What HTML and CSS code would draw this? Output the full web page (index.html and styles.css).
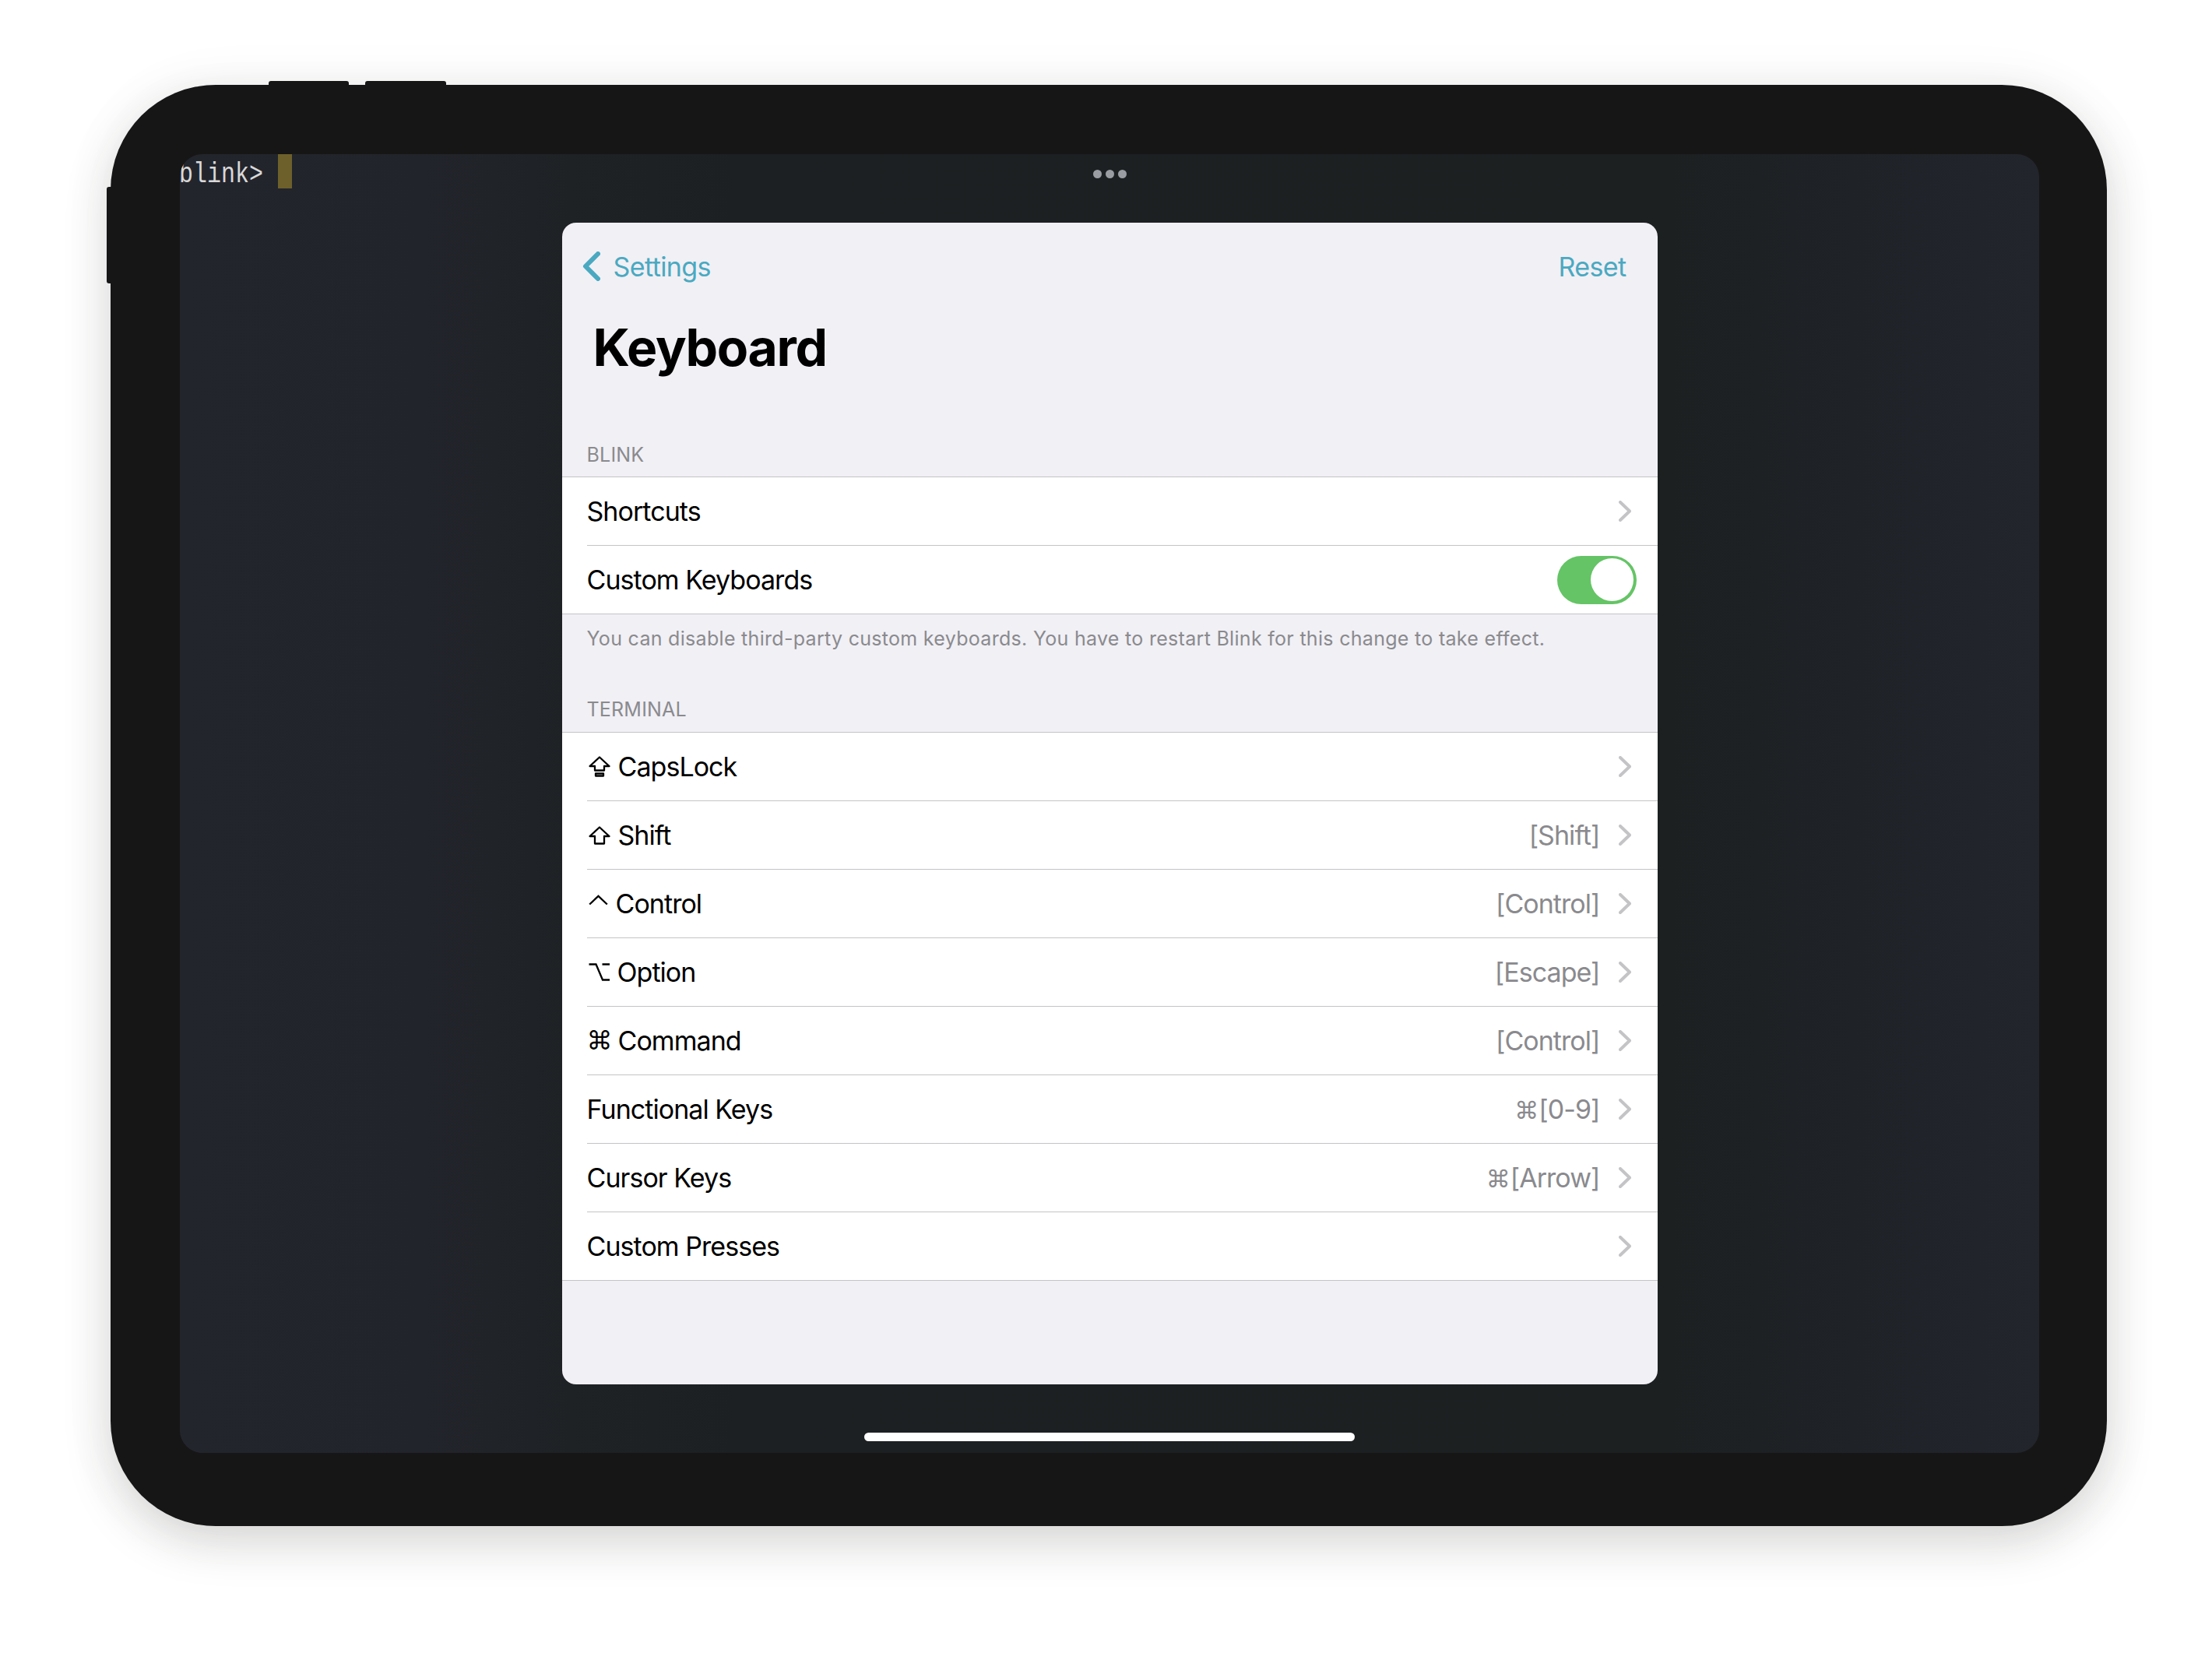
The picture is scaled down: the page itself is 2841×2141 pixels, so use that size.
FILE: index.html
```html
<!DOCTYPE html>
<html lang="en">
<head>
    <meta charset="UTF-8">
    <title>Keyboard</title>
    <link rel="stylesheet" href="styles.css">
</head>
<body>
    <div class="device">
        <span class="side-btn top-a"></span>
        <span class="side-btn top-b"></span>
        <span class="side-btn left-a"></span>
        <div class="screen">
            <div class="terminal">
                <span class="prompt">blink&gt;</span>
                <span class="cursor"></span>
            </div>
            <div class="dots"><i></i><i></i><i></i></div>
            <div class="card">
                <div class="nav">
                    <a class="back">
                        <svg width="23" height="38" viewBox="0 0 23 38"><path d="M20 3 L4 19 L20 35" fill="none" stroke="#4aa9c1" stroke-width="6" stroke-linecap="round" stroke-linejoin="round"/></svg>
                        Settings
                    </a>
                    <a class="reset">Reset</a>
                </div>
                <h1>Keyboard</h1>

                <div class="section-title first">BLINK</div>
                <div class="group">
                    <div class="row">
                        <span class="label">Shortcuts</span>
                        <svg class="chev" width="16" height="27" viewBox="0 0 16 27"><path d="M2 2 L14 13.5 L2 25" fill="none" stroke="#c4c4c7" stroke-width="4" stroke-linecap="round" stroke-linejoin="round"/></svg>
                    </div>
                    <div class="row">
                        <span class="label">Custom Keyboards</span>
                        <span class="toggle"><span class="knob"></span></span>
                    </div>
                </div>
                <p class="note">You can disable third-party custom keyboards. You have to restart Blink for this change to take effect.</p>

                <div class="section-title">TERMINAL</div>
                <div class="group">
                    <div class="row">
                        <span class="label">
                            <svg class="mod" width="28" height="27" viewBox="0 0 28 27"><path d="M14 1.5 L26.5 13 H20 V18.5 H8 V13 H1.5 Z M9 22.5 H19 V25.5 H9 Z" fill="none" stroke="#000" stroke-width="2.3" stroke-linejoin="round"/></svg>
                            CapsLock
                        </span>
                        <svg class="chev" width="16" height="27" viewBox="0 0 16 27"><path d="M2 2 L14 13.5 L2 25" fill="none" stroke="#c4c4c7" stroke-width="4" stroke-linecap="round" stroke-linejoin="round"/></svg>
                    </div>
                    <div class="row">
                        <span class="label">
                            <svg class="mod" width="28" height="24" viewBox="0 0 28 24"><path d="M14 1.5 L26.5 13 H20 V22.5 H8 V13 H1.5 Z" fill="none" stroke="#000" stroke-width="2.3" stroke-linejoin="round"/></svg>
                            Shift
                        </span>
                        <span class="value">[Shift]</span>
                        <svg class="chev" width="16" height="27" viewBox="0 0 16 27"><path d="M2 2 L14 13.5 L2 25" fill="none" stroke="#c4c4c7" stroke-width="4" stroke-linecap="round" stroke-linejoin="round"/></svg>
                    </div>
                    <div class="row">
                        <span class="label">
                            <svg class="mod ctrl" width="25" height="14" viewBox="0 0 25 14"><path d="M1.2 12.5 L12.5 1.8 L23.8 12.5" fill="none" stroke="#000" stroke-width="2.3"/></svg>
                            Control
                        </span>
                        <span class="value">[Control]</span>
                        <svg class="chev" width="16" height="27" viewBox="0 0 16 27"><path d="M2 2 L14 13.5 L2 25" fill="none" stroke="#c4c4c7" stroke-width="4" stroke-linecap="round" stroke-linejoin="round"/></svg>
                    </div>
                    <div class="row">
                        <span class="label">
                            <svg class="mod" width="27" height="23" viewBox="0 0 27 23"><path d="M0.5 1.5 H9.5 L18 21.5 H27 M17.5 1.5 H27" fill="none" stroke="#000" stroke-width="2.3"/></svg>
                            Option
                        </span>
                        <span class="value">[Escape]</span>
                        <svg class="chev" width="16" height="27" viewBox="0 0 16 27"><path d="M2 2 L14 13.5 L2 25" fill="none" stroke="#c4c4c7" stroke-width="4" stroke-linecap="round" stroke-linejoin="round"/></svg>
                    </div>
                    <div class="row">
                        <span class="label"><span class="key">⌘</span>Command</span>
                        <span class="value">[Control]</span>
                        <svg class="chev" width="16" height="27" viewBox="0 0 16 27"><path d="M2 2 L14 13.5 L2 25" fill="none" stroke="#c4c4c7" stroke-width="4" stroke-linecap="round" stroke-linejoin="round"/></svg>
                    </div>
                    <div class="row">
                        <span class="label">Functional Keys</span>
                        <span class="value"><span class="key-value">⌘</span>[0-9]</span>
                        <svg class="chev" width="16" height="27" viewBox="0 0 16 27"><path d="M2 2 L14 13.5 L2 25" fill="none" stroke="#c4c4c7" stroke-width="4" stroke-linecap="round" stroke-linejoin="round"/></svg>
                    </div>
                    <div class="row">
                        <span class="label">Cursor Keys</span>
                        <span class="value"><span class="key-value">⌘</span>[Arrow]</span>
                        <svg class="chev" width="16" height="27" viewBox="0 0 16 27"><path d="M2 2 L14 13.5 L2 25" fill="none" stroke="#c4c4c7" stroke-width="4" stroke-linecap="round" stroke-linejoin="round"/></svg>
                    </div>
                    <div class="row">
                        <span class="label">Custom Presses</span>
                        <svg class="chev" width="16" height="27" viewBox="0 0 16 27"><path d="M2 2 L14 13.5 L2 25" fill="none" stroke="#c4c4c7" stroke-width="4" stroke-linecap="round" stroke-linejoin="round"/></svg>
                    </div>
                </div>
            </div>
            <div class="home-bar"></div>
        </div>
    </div>
</body>
</html>
```

FILE: styles.css
```css
html, body {
    margin: 0;
    background: #fff;
}
body {
    width: 2841px;
    height: 2141px;
    padding: 109px 0 0 142px;
    box-sizing: border-box;
    overflow: hidden;
    font-family: Inter, "Noto Sans", sans-serif;
}
.device {
    position: relative;
    width: 2564px;
    height: 1851px;
    box-sizing: border-box;
    padding: 89px 87px 94px 89px;
    background: #161616;
    border-radius: 135px;
    box-shadow: 0 20px 60px rgba(40, 35, 25, 0.18), 0 0 90px rgba(0, 0, 0, 0.03);
}
.side-btn {
    position: absolute;
    background: #161616;
    border-radius: 3px;
}
.top-a {
    left: 203px;
    top: -5px;
    width: 103px;
    height: 10px;
}
.top-b {
    left: 327px;
    top: -5px;
    width: 104px;
    height: 10px;
}
.left-a {
    left: -5px;
    top: 131px;
    width: 10px;
    height: 124px;
}
.screen {
    position: relative;
    height: 1668px;
    border-radius: 29px;
    overflow: hidden;
    background: linear-gradient(90deg, #23252d 0, #22242b 13%, #1e2225 21%, #1c2022 30%, #1c2021 80%, #1f2227 90%, #22252c 100%);
}
.terminal {
    display: flex;
    height: 44px;
}
.prompt {
    width: 126px;
    margin-left: -1px;
    font: 37px/52px "Liberation Mono", monospace;
    color: #d8d8d8;
    transform: scaleX(0.81);
    transform-origin: 0 0;
}
.cursor {
    width: 18px;
    height: 44px;
    margin-left: 1px;
    background: #6d602a;
}
.dots {
    position: absolute;
    left: 1173px;
    top: 20px;
    display: flex;
    gap: 5px;
}
.dots i {
    width: 11px;
    height: 11px;
    border-radius: 50%;
    background: #9a9ea2;
}
.card {
    width: 1407px;
    height: 1492px;
    margin: 44px auto 0;
    background: #f1f0f5;
    border-radius: 18px;
    overflow: hidden;
}
.nav {
    display: flex;
    justify-content: space-between;
    align-items: center;
    height: 112px;
    padding: 0 40px 0 26px;
    font-size: 34px;
    letter-spacing: -0.6px;
    color: #4aa9c1;
}
.back {
    display: flex;
    align-items: center;
    gap: 17px;
}
h1 {
    margin: 0;
    padding: 3px 0 0 40px;
    font-size: 66px;
    line-height: 90px;
    font-weight: 700;
    letter-spacing: -1.3px;
    color: #000;
}
.section-title {
    height: 32px;
    padding: 59px 32px 0;
    font-size: 25px;
    line-height: 32px;
    letter-spacing: 0.2px;
    color: #8a8a8e;
}
.section-title.first {
    padding-top: 77px;
    margin-bottom: -1px;
}
.group {
    margin-top: 13px;
    background: #fff;
    border-top: 1px solid #c4c4c6;
    border-bottom: 1px solid #c4c4c6;
}
.row {
    display: flex;
    align-items: center;
    height: 87px;
    margin-left: 32px;
    padding-right: 34px;
    font-size: 34px;
    letter-spacing: -0.95px;
    color: #000;
}
.row + .row {
    border-top: 1px solid #c4c4c6;
}
.label {
    display: flex;
    align-items: center;
    flex: 1;
}
.mod {
    margin: 0 10px 0 2px;
}
.ctrl {
    margin-bottom: 10px;
}
.value {
    margin-right: 24px;
    color: #8a8a8e;
}
.key {
    margin-right: 7px;
    font-family: "DejaVu Sans", sans-serif;
    font-size: 33px;
    letter-spacing: 0;
}
.key-value {
    font-family: "DejaVu Sans", sans-serif;
    font-size: 31px;
    letter-spacing: 0;
}
.chev {
    display: block;
}
.toggle {
    display: flex;
    justify-content: flex-end;
    align-items: center;
    width: 102px;
    height: 62px;
    margin-right: -7px;
    padding-right: 4px;
    box-sizing: border-box;
    border-radius: 31px;
    background: #65c466;
}
.knob {
    width: 55px;
    height: 55px;
    border-radius: 50%;
    background: #fff;
}
.note {
    margin: 0;
    padding: 15px 32px 0;
    font-size: 25px;
    line-height: 32px;
    letter-spacing: 0.3px;
    color: #8a8a8e;
}
.home-bar {
    width: 630px;
    height: 11px;
    margin: 62px auto 0;
    border-radius: 6px;
    background: #fff;
}
```
